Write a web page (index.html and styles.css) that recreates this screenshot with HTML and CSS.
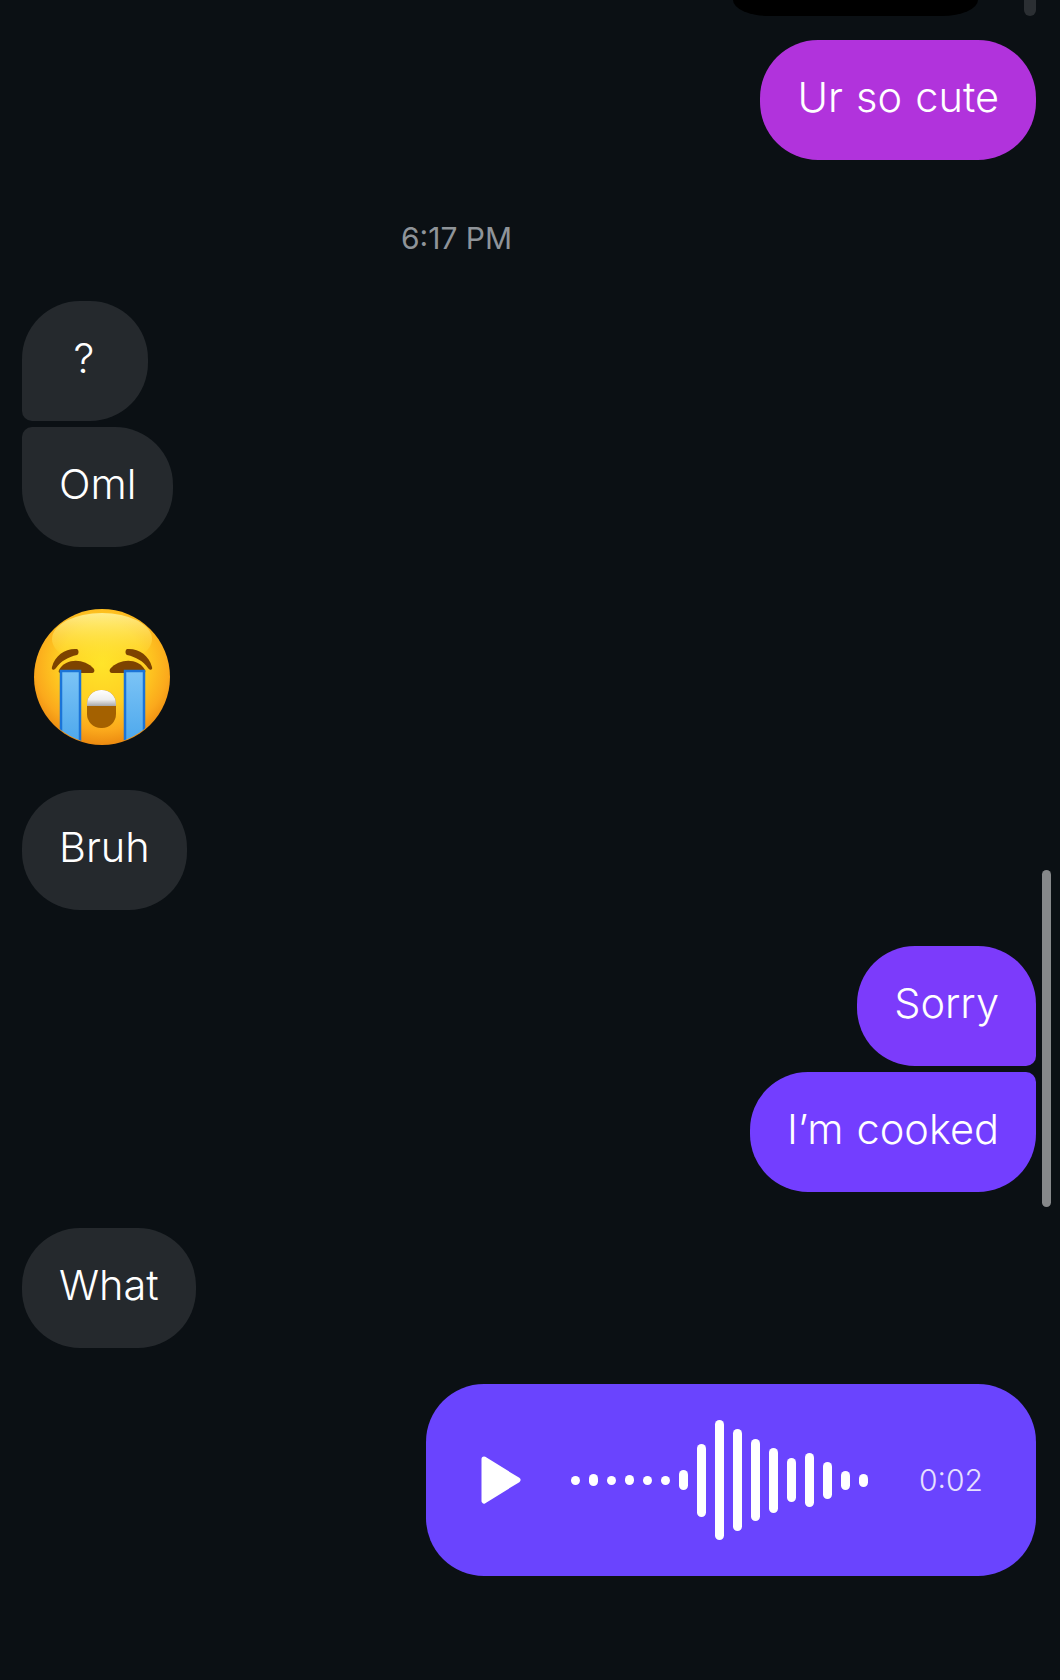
FILE: index.html
```html
<!DOCTYPE html>
<html lang="en">

<head>
    <meta charset="UTF-8">
    <meta name="viewport" content="width=device-width, initial-scale=1.0">
    <title>Chat</title>
    <link rel="stylesheet" href="styles.css">
</head>

<body>
    <div class="scroll-thumb"></div>

    <div class="chat">
        <div class="top-row">
            <div class="reply-stub"></div>
            <div class="reply-line"></div>
        </div>

        <div class="row row-me gap-ur">
            <div class="bubble bubble-pink">Ur so cute</div>
        </div>

        <div class="time">6:17 PM</div>

        <div class="row gap-question">
            <div class="bubble bubble-them bubble-short corner-bl">?</div>
        </div>
        <div class="row gap-tight">
            <div class="bubble bubble-them corner-tl">Oml</div>
        </div>

        <div class="row gap-emoji">
            <svg class="emoji" viewBox="0 0 136 136" width="136" height="136">
                <defs>
                    <radialGradient id="faceFill" cx="50%" cy="40%" r="60%">
                        <stop offset="0%" stop-color="#ffe42a" />
                        <stop offset="50%" stop-color="#ffd022" />
                        <stop offset="82%" stop-color="#fba91c" />
                        <stop offset="100%" stop-color="#ec8a10" />
                    </radialGradient>
                    <linearGradient id="shine" x1="0" y1="0" x2="0" y2="1">
                        <stop offset="0%" stop-color="#fff7a6" stop-opacity="0.8" />
                        <stop offset="100%" stop-color="#ffe42a" stop-opacity="0" />
                    </linearGradient>
                    <linearGradient id="tearFill" x1="0" y1="0" x2="0" y2="1">
                        <stop offset="0%" stop-color="#7cc4f6" />
                        <stop offset="100%" stop-color="#4aa6ec" />
                    </linearGradient>
                    <linearGradient id="teethFill" x1="0" y1="0" x2="0" y2="1">
                        <stop offset="0%" stop-color="#ffffff" />
                        <stop offset="60%" stop-color="#eeeeee" />
                        <stop offset="100%" stop-color="#a8a8a8" />
                    </linearGradient>
                    <clipPath id="faceClip">
                        <circle cx="68" cy="68" r="67" />
                    </clipPath>
                    <clipPath id="mouthClip">
                        <rect x="53" y="81" width="29" height="38" rx="14" />
                    </clipPath>
                </defs>
                <circle cx="68" cy="68" r="68" fill="url(#faceFill)" />
                <g clip-path="url(#faceClip)">
                    <ellipse cx="68" cy="30" rx="50" ry="26" fill="url(#shine)" />
                </g>
                <path d="M18 58 C21 46 32 39 43 40 C45 41 45 45 43 46 C34 48 27 52 22 59 C20 62 17 61 18 58 Z" fill="#7d4300" />
                <path d="M118 58 C115 46 104 39 93 40 C91 41 91 45 93 46 C102 48 109 52 114 59 C116 62 119 61 118 58 Z" fill="#7d4300" />
                <path d="M25 61 C32 49 50 49 60 60 C61 62 60 64 58 64 L27 64 C25 64 24 63 25 61 Z" fill="#7d4300" />
                <path d="M111 61 C104 49 86 49 76 60 C75 62 76 64 78 64 L109 64 C111 64 112 63 111 61 Z" fill="#7d4300" />
                <g clip-path="url(#faceClip)">
                    <rect x="27" y="62" width="19" height="76" fill="url(#tearFill)" stroke="#1b74d8" stroke-width="2.5" />
                    <rect x="91" y="62" width="19" height="76" fill="url(#tearFill)" stroke="#1b74d8" stroke-width="2.5" />
                </g>
                <rect x="53" y="81" width="29" height="38" rx="14" fill="#a46100" />
                <rect x="53" y="81" width="29" height="16" fill="url(#teethFill)" clip-path="url(#mouthClip)" />
            </svg>
        </div>

        <div class="row gap-bruh">
            <div class="bubble bubble-them">Bruh</div>
        </div>

        <div class="row row-me gap-sorry">
            <div class="bubble bubble-violet corner-br">Sorry</div>
        </div>
        <div class="row row-me gap-tight">
            <div class="bubble bubble-violet2 corner-tr">I’m cooked</div>
        </div>

        <div class="row gap-what">
            <div class="bubble bubble-them">What</div>
        </div>

        <div class="row row-me gap-what">
            <div class="voice">
                <svg class="play" viewBox="0 0 40 48" width="40" height="48">
                    <path d="M3 3 L37 24 L3 45 Z" fill="#fff" stroke="#fff" stroke-width="5" stroke-linejoin="round" />
                </svg>
                <div class="wave">
                    <span class="bar" style="height:9px"></span>
                    <span class="bar" style="height:12px"></span>
                    <span class="bar" style="height:9px"></span>
                    <span class="bar" style="height:10px"></span>
                    <span class="bar" style="height:9px"></span>
                    <span class="bar" style="height:9px"></span>
                    <span class="bar" style="height:20px"></span>
                    <span class="bar" style="height:73px"></span>
                    <span class="bar" style="height:120px"></span>
                    <span class="bar" style="height:102px"></span>
                    <span class="bar" style="height:82px"></span>
                    <span class="bar" style="height:65px"></span>
                    <span class="bar" style="height:44px"></span>
                    <span class="bar" style="height:54px"></span>
                    <span class="bar" style="height:37px"></span>
                    <span class="bar" style="height:19px"></span>
                    <span class="bar" style="height:13px"></span>
                </div>
                <div class="duration">0:02</div>
            </div>
        </div>
    </div>
</body>

</html>
```

FILE: styles.css
```css
body {
    margin: 0;
    padding: 0;
    height: 1680px;
    overflow: hidden;
    position: relative;
    background-color: #0b1014;
    color: #fff;
    font-family: Inter, "Liberation Sans", sans-serif;
}

.chat {
    padding: 0 24px 0 22px;
}

.top-row {
    display: flex;
    justify-content: flex-end;
    gap: 46px;
    height: 16px;
}

.reply-stub {
    width: 245px;
    background-color: #000;
    border-radius: 0 0 36px 36px / 0 0 16px 16px;
}

.reply-line {
    width: 12px;
    background-color: #2b2f33;
    border-radius: 0 0 6px 6px;
}

.row {
    display: flex;
}

.row-me {
    justify-content: flex-end;
}

.gap-ur {
    margin-top: 24px;
}

.gap-question {
    margin-top: 45px;
}

.gap-tight {
    margin-top: 6px;
}

.gap-emoji {
    margin-top: 62px;
    padding-left: 12px;
}

.gap-bruh {
    margin-top: 45px;
}

.gap-sorry {
    margin-top: 36px;
}

.gap-what {
    margin-top: 36px;
}

.bubble {
    height: 120px;
    box-sizing: border-box;
    padding: 0 37px 6px;
    border-radius: 58px;
    display: flex;
    align-items: center;
    font-size: 41.5px;
    font-weight: 350;
    word-spacing: 1.5px;
    white-space: nowrap;
}

.bubble-short {
    width: 126px;
    padding-right: 39px;
    justify-content: center;
}

.bubble-them {
    background-color: #25292d;
}

.bubble-pink {
    background-color: #b133dc;
}

.bubble-violet {
    background-color: #7c3bfb;
}

.bubble-violet2 {
    background-color: #733eff;
}

.corner-bl {
    border-bottom-left-radius: 10px;
}

.corner-tl {
    border-top-left-radius: 10px;
}

.corner-br {
    border-bottom-right-radius: 10px;
}

.corner-tr {
    border-top-right-radius: 10px;
}

.time {
    margin-top: 60px;
    padding-left: 379px;
    font-size: 30px;
    line-height: 36px;
    color: #8f9499;
}

.emoji {
    display: block;
}

.voice {
    width: 610px;
    height: 192px;
    box-sizing: border-box;
    padding: 0 53px 0 55px;
    background-color: #6a44fe;
    border-radius: 58px;
    display: flex;
    align-items: center;
}

.wave {
    display: flex;
    align-items: center;
    gap: 9px;
    margin-left: 50px;
}

.bar {
    width: 9px;
    border-radius: 5px;
    background-color: #fff;
}

.duration {
    margin-left: auto;
    font-size: 30px;
    font-weight: 350;
    color: #e6e0ff;
}

.scroll-thumb {
    position: absolute;
    top: 870px;
    left: 1042px;
    width: 9px;
    height: 337px;
    background-color: #86888a;
    border-radius: 5px;
}
```
